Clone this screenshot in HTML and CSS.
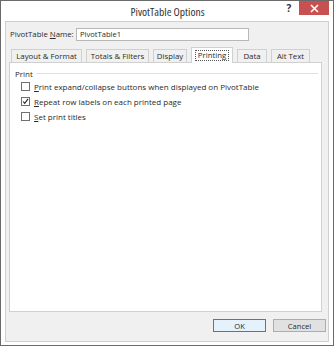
FILE: index.html
```html
<!DOCTYPE html>
<html>
<head>
<meta charset="utf-8">
<link rel="stylesheet" href="styles.css">
</head>
<body>
<div class="screen">
  <div class="window">
    <div class="titlebar">
      <div class="title">PivotTable Options</div>
      <div class="help">?</div>
      <div class="close">
        <svg width="9" height="9" viewBox="0 0 9 9"><path d="M1 1 L8 8 M8 1 L1 8" stroke="#fff" stroke-width="1.6"/></svg>
      </div>
    </div>
    <div class="client">
      <div class="namerow">
        <span class="label">PivotTable <u>N</u>ame:</span>
        <div class="input">PivotTable1</div>
      </div>
      <div class="tabs">
        <div class="tab">Layout &amp; Format</div>
        <div class="tab">Totals &amp; Filters</div>
        <div class="tab">Display</div>
        <div class="tab active"><span class="focus">Printing</span></div>
        <div class="tab">Data</div>
        <div class="tab">Alt Text</div>
      </div>
      <div class="panel">
        <div class="group">
          <span class="grouplabel">Print</span>
          <span class="groupline"></span>
        </div>
        <div class="check"><span class="box"></span><span><u>P</u>rint expand/collapse buttons when displayed on PivotTable</span></div>
        <div class="check"><span class="box checked"><svg width="9" height="9" viewBox="0 0 9 9"><path d="M1.5 4.5 L3.5 7 L7.8 1.2" stroke="#222" stroke-width="1.4" fill="none"/></svg></span><span><u>R</u>epeat row labels on each printed page</span></div>
        <div class="check"><span class="box"></span><span><u>S</u>et print titles</span></div>
      </div>
      <div class="buttons">
        <div class="btn default">OK</div>
        <div class="btn">Cancel</div>
      </div>
    </div>
  </div>
</div>
</body>
</html>
```

FILE: styles.css
```css
html, body {
  margin: 0;
  padding: 0;
  width: 334px;
  height: 346px;
  overflow: hidden;
  background: #fff;
}
.screen {
  width: 334px;
  height: 346px;
  box-sizing: border-box;
  border: 1px solid #6a6a6a;
  background: #fff;
  font-family: "Open Sans", "Noto Sans", sans-serif;
  color: #2a2a2a;
}
.window {
  display: flex;
  flex-direction: column;
  height: 100%;
  padding: 0 4px 3px 4px;
  box-sizing: border-box;
}
.titlebar {
  height: 20px;
  flex: none;
  display: flex;
  align-items: center;
}
.title {
  flex: 1;
  text-align: center;
  font-size: 11.5px;
  font-stretch: 87%;
  color: #333;
  padding-left: 46px;
}
.help {
  font-size: 10px;
  font-weight: bold;
  color: #333;
  width: 10px;
  text-align: center;
  margin-right: 5px;
  align-self: flex-start;
}
.close {
  width: 30px;
  height: 14px;
  background: #c75050;
  align-self: flex-start;
  display: flex;
  align-items: center;
  justify-content: center;
}
.close svg { display: block; }
.client {
  flex: 1;
  border: 1px solid #cfcfcf;
  background: #f0f0f0;
  display: flex;
  flex-direction: column;
  padding: 0 2px 0 3px;
  font-size: 8px;
}
.namerow {
  display: flex;
  align-items: center;
  height: 14px;
  margin-top: 5px;
  padding-left: 1px;
}
.label {
  width: 66px;
  flex: none;
  font-size: 7.8px;
  white-space: nowrap;
}
.input {
  width: 168px;
  height: 11px;
  border: 1px solid #b8b8b8;
  background: #fff;
  display: flex;
  align-items: center;
  padding-left: 3px;
  font-size: 7.6px;
}
.tabs {
  display: flex;
  align-items: flex-end;
  margin-top: 5px;
  padding-left: 2px;
  height: 16px;
  gap: 4px;
}
.tab {
  box-sizing: border-box;
  height: 13px;
  border: 1px solid #d0d0d0;
  border-bottom: none;
  background: #f0f0f0;
  display: flex;
  align-items: center;
  justify-content: center;
  font-size: 7.8px;
  white-space: nowrap;
}
.tab:nth-child(1) { width: 71px; }
.tab:nth-child(2) { width: 63px; }
.tab:nth-child(3) { width: 34px; }
.tab:nth-child(4) { width: 42px; }
.tab:nth-child(5) { width: 30px; }
.tab:nth-child(6) { width: 39px; }
.tab.active {
  height: 16px;
  background: #fff;
  position: relative;
  margin-bottom: -1px;
  z-index: 1;
}
.focus {
  border: 1px dotted #555;
  padding: 0 2px;
  line-height: 9px;
}
.panel {
  flex: none;
  height: 250px;
  border: 1px solid #d0d0d0;
  background: #fff;
  width: 313px;
  box-sizing: border-box;
  padding: 4px 0 0 5px;
}
.group {
  display: flex;
  align-items: center;
  height: 12px;
  padding-right: 3px;
}
.grouplabel { margin-right: 3px; }
.groupline {
  flex: 1;
  height: 1px;
  background: #e0e0e0;
}
.check {
  display: flex;
  align-items: center;
  height: 15px;
  padding-left: 6px;
}
.check:first-of-type { margin-top: 2px; }
.box {
  width: 9px;
  height: 9px;
  border: 1px solid #707070;
  background: #fff;
  margin-right: 4px;
  flex: none;
  display: flex;
  align-items: center;
  justify-content: center;
  box-sizing: border-box;
}
.box svg { display: block; }
.buttons {
  display: flex;
  justify-content: flex-end;
  gap: 7px;
  margin-top: 7px;
}
.btn {
  width: 51px;
  height: 11px;
  border: 1px solid #adadad;
  background: #e1e1e1;
  display: flex;
  align-items: center;
  justify-content: center;
  font-size: 7.6px;
}
.btn.default {
  border-color: #3c7fb1;
  background: #e5f1fb;
}
```
